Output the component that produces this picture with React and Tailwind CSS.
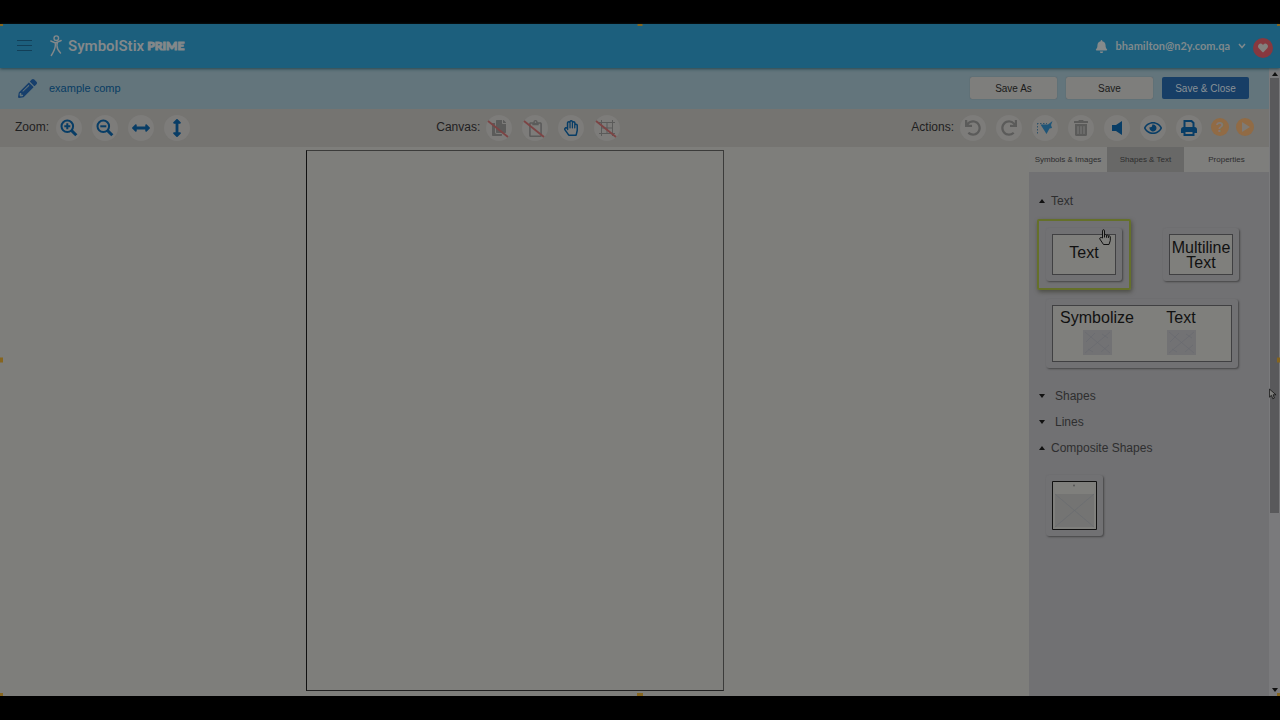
import React from "react";
import {
  FaArrowsAltH, FaArrowsAltV, FaBell, FaCopy, FaHeart, FaPencilAlt,
  FaRedo, FaRegClipboard, FaRegEye, FaRegHandPaper, FaTrashAlt, FaUndo,
} from "react-icons/fa";

function Magnifier({ plus }) {
  return (
    <svg viewBox="0 0 18 18" className="size-[18px]" fill="none" stroke="currentColor" strokeWidth="2">
      <circle cx="7.3" cy="7.3" r="5.8" />
      <path d="M11.5 11.5L16.3 16.3" strokeWidth="3" />
      <path d={plus ? "M4.3 7.3h6M7.3 4.3v6" : "M4.3 7.3h6"} />
    </svg>
  );
}

function GridIcon() {
  return (
    <svg viewBox="0 0 18 18" className="size-[18px]" fill="none" stroke="currentColor" strokeWidth="1">
      <path d="M1 3.500h16M1 14.500h16M3.500 1v16M14.500 1v16M9 4v10M4 9h10" />
    </svg>
  );
}

function SelectIcon() {
  return (
    <svg viewBox="0 0 18 18" className="size-[18px]">
      <path d="M1 4.5h10M1.5 4v12" fill="none" stroke="#31536a" strokeDasharray="1.5 1.5" />
      <path d="M4.5 5.5L12 5.5L16.5 2L15 6L16 9L13.500 9.500L10.500 15L8 11Z" fill="#1f5578" />
    </svg>
  );
}

function SpeakerIcon() {
  return (
    <svg viewBox="0 0 10 14" className="h-3.5 w-2.5" fill="currentColor">
      <path d="M0 4h4L10 0v14L4 10H0Z" />
    </svg>
  );
}

function PrinterIcon() {
  return (
    <svg viewBox="0 0 18 18" className="size-[18px]">
      <path d="M4.500 9V2h7l2 2v5" fill="none" stroke="currentColor" strokeWidth="2" />
      <path d="M1 10.500Q1 8 3.500 8h11Q17 8 17 10.500V14H1Z" fill="currentColor" />
      <path d="M4.500 12h9v4h-9Z" fill="#7d7c7a" stroke="currentColor" strokeWidth="2" />
    </svg>
  );
}

function Tool({ label, disabled, struck, children }) {
  return (
    <button
      type="button"
      aria-label={label}
      disabled={disabled}
      className={
        "relative flex size-[26px] items-center justify-center rounded-full bg-[#7d7c7a] " +
        (disabled ? "text-[#5b5b5a]" : "text-[#083d66]")
      }
    >
      {children}
      {struck && (
        <svg viewBox="0 0 26 26" className="absolute inset-0 size-[26px]" fill="none">
          <path d="M2 6L22 22" stroke="#7c4444" strokeWidth="1.8" />
        </svg>
      )}
    </button>
  );
}

function Arrow({ up }) {
  return (
    <svg viewBox="0 0 6 4" className="h-1 w-1.5 shrink-0" fill="#111">
      <path d={up ? "M0 4L3 0L6 4Z" : "M0 0L3 4L6 0Z"} />
    </svg>
  );
}

function Section({ title, open }) {
  return (
    <button
      type="button"
      aria-expanded={!!open}
      className={"flex h-[26px] items-center text-xs text-[#2e2e2f] " + (open ? "gap-1.5" : "gap-2.5")}
    >
      <Arrow up={open} />
      {title}
    </button>
  );
}

const card = "rounded-[3px] bg-[#717173] p-1.5 shadow-[1px_1px_2px_#454546] ";

function Placeholder() {
  return (
    <svg viewBox="0 0 29 25" className="h-[25px] w-[29px]">
      <path d="M0 0h29v25H0z" fill="#727274" />
      <path d="M2 2L27 23M27 2L2 23M3 12L12 3M18 22L26 15M5 19l5 3M19 4l6 4" stroke="#696a70" strokeWidth=".7" />
    </svg>
  );
}

function Handle({ place }) {
  return <span aria-hidden="true" className={"absolute bg-[#86651e] " + place} />;
}

export default function App() {
  return (
    <div className="flex min-h-screen flex-col bg-black py-6 font-['Liberation_Sans',Arial,sans-serif]">
      <div className="relative flex grow flex-col bg-[#7e7e7b]">
        <header className="relative z-10 flex h-11 items-center bg-[#1c5f7d] pl-[17px] pr-[7px] shadow-[0_1px_3px_#24464f]">
          <button type="button" aria-label="Menu" className="flex w-[15px] flex-col gap-1 pb-0.5">
            <span className="h-px bg-[#123f58]" />
            <span className="h-px bg-[#123f58]" />
            <span className="h-px bg-[#123f58]" />
          </button>
          <a href="#home" className="ml-[18px] flex items-center text-[#83888a]">
            <svg viewBox="0 0 12 22" className="h-[22px] w-3" fill="none" stroke="currentColor" strokeWidth="1.4" strokeLinecap="round">
              <circle cx="6.300" cy="3.200" r="2.300" />
              <path d="M.8 6L5.500 8L11.200 5.500M5.200 8C5.800 11 5 15 1.300 20.500M7.300 8C6.500 11 7.500 15 10.500 18" />
            </svg>
            <span className="ml-1.5 font-['Roboto',sans-serif] text-[15px] font-semibold">SymbolStix</span>
            <span className="ml-[3px] font-['Lato',sans-serif] text-xs font-black [-webkit-text-stroke:1px_currentColor]">PRIME</span>
          </a>
          <FaBell className="ml-auto size-[13px] text-[#858a8b]" />
          <button type="button" className="ml-2 flex items-center gap-2 font-['Lato',sans-serif] text-[11px] font-bold text-[#7f898c]">
            bhamilton@n2y.com.qa
            <svg viewBox="0 0 8 6" className="h-1.5 w-2" fill="none" stroke="currentColor" strokeWidth="1.5">
              <path d="M1 1l3 3.500L7 1" />
            </svg>
          </button>
          <span className="ml-[7px] mt-1 flex size-5 items-center justify-center rounded-full bg-[#87383f]">
            <FaHeart className="size-2.5 text-[#83807e]" />
          </span>
        </header>

        <div className="flex grow">
          <div className="flex min-w-0 grow flex-col">
            <div className="flex h-[41px] items-center bg-[#63757c] pb-px pl-[18px] pr-5">
              <FaPencilAlt className="size-[19px] text-[#173f6c]" />
              <h1 className="ml-3 text-[11px] text-[#083c63]">example comp</h1>
              <div className="ml-auto flex gap-[9px] text-[10px]">
                <button type="button" className="h-[22px] w-[87px] rounded-xs bg-[#7e7e7c] text-[#1a1a1a] shadow-[0_0_1px_#475257]">Save As</button>
                <button type="button" className="h-[22px] w-[87px] rounded-xs bg-[#7e7e7c] text-[#1a1a1a] shadow-[0_0_1px_#475257]">Save</button>
                <button type="button" className="h-[22px] w-[87px] rounded-xs bg-[#173e66] text-[#8a9196]">Save &amp; Close</button>
              </div>
            </div>

            <div className="flex h-[38px] items-center bg-[#757471] px-[15px] text-xs text-[#1f2021]">
              <div className="flex basis-[34%] items-center gap-2.5">
                <span className="-mr-[3px] pb-0.5">Zoom:</span>
                <Tool label="Zoom in"><Magnifier plus /></Tool>
                <Tool label="Zoom out"><Magnifier /></Tool>
                <Tool label="Fit width"><FaArrowsAltH className="size-[18px]" /></Tool>
                <Tool label="Fit height"><FaArrowsAltV className="size-[18px]" /></Tool>
              </div>
              <div className="flex items-center gap-2.5">
                <span className="-mr-1 pb-0.5">Canvas:</span>
                <Tool label="Copy" disabled struck><FaCopy className="size-4" /></Tool>
                <Tool label="Paste" disabled struck><FaRegClipboard className="size-[17px]" /></Tool>
                <Tool label="Pan"><FaRegHandPaper className="size-4" /></Tool>
                <Tool label="Grid" disabled struck><GridIcon /></Tool>
              </div>
              <div className="ml-auto flex items-center gap-2.5">
                <span className="-mr-1 pb-0.5">Actions:</span>
                <Tool label="Undo" disabled><FaUndo className="size-4" /></Tool>
                <Tool label="Redo" disabled><FaRedo className="size-4" /></Tool>
                <Tool label="Select"><SelectIcon /></Tool>
                <Tool label="Delete" disabled><FaTrashAlt className="size-4" /></Tool>
                <Tool label="Speak"><SpeakerIcon /></Tool>
                <Tool label="Preview"><FaRegEye className="size-[18px]" /></Tool>
                <Tool label="Print"><PrinterIcon /></Tool>
                <span className="-ml-px mb-0.5 flex gap-[7px]">
                  <button type="button" aria-label="Help" className="size-[18px] rounded-full bg-[#916b45] text-sm leading-[18px] font-bold text-[#7f7a74]">?</button>
                  <button type="button" aria-label="Play tutorial" className="flex size-[18px] items-center justify-center rounded-full bg-[#916b45]">
                    <svg viewBox="0 0 8 10" className="ml-0.5 h-2.5 w-2" fill="#7f7a74"><path d="M0 0L8 5L0 10Z" /></svg>
                  </button>
                </span>
              </div>
            </div>

            <div className="flex grow">
              <main className="flex grow justify-center pb-[5px] pt-[3px]">
                <div className="w-[418px] border border-[#3b3b3a] border-l-[#111] border-b-[#222]" />
              </main>
              <aside className="w-60 bg-[#717173]">
                <div role="tablist" className="flex h-[25px] text-[8px] text-[#2d2d2e]">
                  <button type="button" role="tab" className="w-[78px] bg-[#7e7e7c]">Symbols &amp; Images</button>
                  <button type="button" role="tab" aria-selected="true" className="w-[77px] bg-[#686867]">Shapes &amp; Text</button>
                  <button type="button" role="tab" className="grow bg-[#7e7e7c]">Properties</button>
                </div>
                <div className="flex flex-col items-start pl-[10px] pr-7 pt-4">
                  <Section title="Text" open />
                  <div className="-ml-0.5 mt-[5px] flex w-full items-center justify-between">
                    <button type="button" className="rounded-xs border-2 border-[#65702a] p-[7px] shadow-[1px_2px_4px_#4c4d45]">
                      <span className={"block " + card}>
                        <span className="flex h-[41px] w-[64px] items-center justify-center border border-[#404042] bg-[#7f7f7c] pb-1 text-base text-[#111]">Text</span>
                      </span>
                    </button>
                    <button type="button" className={card}>
                      <span className="flex h-[41px] w-[64px] items-center justify-center border border-[#404042] bg-[#7f7f7c] text-base leading-[15px] text-[#111]">Multiline<br />Text</span>
                    </button>
                  </div>
                  <button type="button" className={"ml-[7px] mt-[9px] " + card}>
                    <span className="grid h-[57px] w-[180px] grid-cols-[88px_80px] content-start justify-items-center border border-[#404042] bg-[#7f7f7c] text-base text-[#111]">
                      <span>Symbolize</span>
                      <span>Text</span>
                      <Placeholder />
                      <Placeholder />
                    </span>
                  </button>
                  <div className="mt-[15px]"><Section title="Shapes" /></div>
                  <Section title="Lines" />
                  <Section title="Composite Shapes" open />
                  <button type="button" aria-label="Picture card" className={"ml-[7px] mt-3.5 " + card}>
                    <svg viewBox="0 0 45 49" className="h-[49px] w-[45px]">
                      <path d="M.5 .5h44v48H.5z" fill="#7f7f7c" stroke="#111" />
                      <path d="M3 13h39v33H3z" fill="#747473" />
                      <path d="M3 13l39 33M42 13L3 46" stroke="#686b70" strokeWidth=".7" />
                      <circle cx="22" cy="4.500" r="1" fill="#555" />
                    </svg>
                  </button>
                </div>
              </aside>
            </div>
          </div>

          <div aria-hidden="true" className="flex w-[11px] flex-col items-center justify-between bg-[#7a7a7c] py-1">
            <Arrow up />
            <span className="mt-0.5 w-[9px] basis-[435px] bg-[#59595b]" />
            <span className="grow" />
            <Arrow />
          </div>
        </div>

        <Handle place="left-0 top-0 z-20 h-0.5 w-[3px]" />
        <Handle place="left-1/2 top-0 z-20 h-0.5 w-[5px] -translate-x-1/2" />
        <Handle place="right-0 top-0 z-20 h-0.5 w-[3px]" />
        <Handle place="left-0 top-1/2 h-[5px] w-[3px] -translate-y-1/2" />
        <Handle place="right-0 top-1/2 h-[5px] w-[3px] -translate-y-1/2" />
        <Handle place="bottom-0 left-0 h-[3px] w-[3px]" />
        <Handle place="bottom-0 left-1/2 h-[3px] w-[6px] -translate-x-1/2" />
        <Handle place="bottom-0 right-0 h-[3px] w-[3px]" />

        <svg viewBox="0 0 12 16" className="absolute right-[169px] top-[205px] h-4 w-3" fill="#7f7f7c" stroke="#111" strokeWidth="1">
          <path d="M3.500 9V1.800C3.500 .3 5.500 .3 5.500 1.800V6C6 5.200 7.500 5.400 7.500 6.500C8 5.800 9.300 6 9.400 7C10 6.500 11.300 6.800 11.300 8V11.500L10 15.500H4.500L.8 10C.3 8.500 2 8 3.500 9ZM5.500 6v2.500M7.500 6.500v2.200M9.400 7v2" />
        </svg>
        <svg viewBox="0 0 10 14" className="absolute right-[3px] top-[363px] h-3.5 w-2" fill="#80807e" stroke="#111">
          <path d="M.5 .8V11L3 8.700L4.800 13L6.800 12L5 8H8.800Z" />
        </svg>
      </div>
    </div>
  );
}
